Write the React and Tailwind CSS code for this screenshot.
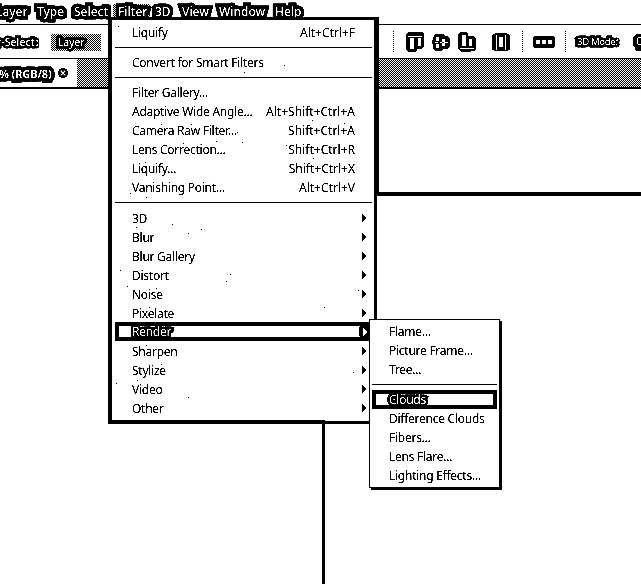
const menuTop = ["Filter Gallery...", "Adaptive Wide Angle...", "Camera Raw Filter...", "Lens Correction...", "Liquify...", "Vanishing Point..."];
const shortcuts = ["", "Alt+Shift+Ctrl+A", "Shift+Ctrl+A", "Shift+Ctrl+R", "Shift+Ctrl+X", "Alt+Ctrl+V"];
const groups = ["3D", "Blur", "Blur Gallery", "Distort", "Noise", "Pixelate", "Render", "Sharpen", "Stylize", "Video", "Other"];
const halo = "text-white [-webkit-text-stroke:7px_#000] [paint-order:stroke_fill]";
const thinHalo = "text-white [-webkit-text-stroke:5px_#000] [paint-order:stroke_fill]";
const checker = "bg-[repeating-conic-gradient(#000_0_25%,#fff_0_50%)] bg-[length:2px_2px]";
const menubar = [
  ["Layer", "w-[41px]"],
  ["Type", "w-[37px]"],
  ["Select", "w-[39px]"],
  ["Filter", "w-[37px] pl-[5px]"],
  ["3D", "w-[27px] pl-[5px]"],
  ["View", "w-[37px] pl-[5px]"],
  ["Window", "w-[56px] pl-[5px]"],
  ["Help", "w-[40px] pl-[5px]"],
];

function Arrow({ light }) {
  return (
    <svg width="4" height="8" viewBox="0 0 4 8" className="shrink-0" shapeRendering="crispEdges">
      <path d="M0 0h1v1h1v1h1v1h1v2h-1v1h-1v1h-1v1h-1z" fill={light ? "#fff" : "#000"} />
    </svg>
  );
}

function Row({ label, right }) {
  return (
    <div className="flex h-[19px] items-center justify-between pl-5 pr-[19px]">
      <span className="tracking-[-0.26px]">{label}</span>
      <span>{right}</span>
    </div>
  );
}

function Rule() {
  return <div className="ml-[3px] mr-[2px] h-px shrink-0 bg-black" />;
}

function ToolIcons() {
  return (
    <svg width="264" height="33" viewBox="377 25 264 33" className="block" shapeRendering="crispEdges">
      <path d="M393.500 31v22M522.500 31v22M565.500 31v22" stroke="#000" strokeDasharray="1 1" />
      <path d="M408 32h14l2 2v12l-3 3h-4v2l-2 1h-7l-2-2V34z" />
      <path d="M408 36h14v1h-14zM410 38h4v11h-4zM418 38h3v8h-3z" fill="#fff" />
      <path d="M435 34h8l2 2h3l2 3v7l-3 3h-4l-2 2h-6l-2-2v-4l-1-2 1-5z" />
      <path d="M435 42h3v1h-3zM440 42h2v1h-2zM444 42h4v1h-4zM436 37h3v4h-3zM436 44h3v4h-3zM442 39h3v3h-3zM442 43h3v3h-3z" fill="#fff" />
      <path d="M460 32h6l2 2v2h5l3 3v10l-2 2h-3v1h-10l-3-3V34z" />
      <path d="M462 35h4v11h-4zM469 39h3v7h-3zM460 48h14v1h-14z" fill="#fff" />
      <path d="M492 35l4-2h10l4 2v15l-4 1h-10l-4-1z" />
      <path d="M496.500 35v15M505.500 35v15" stroke="#fff" />
      <path d="M499 37h4v10h-4z" fill="#fff" />
      <path d="M533 37l2-1h18l2 1v10l-2 1h-18l-2-1z" />
      <path d="M536 40h4v4h-4zM542 40h4v4h-4zM548 40h4v4h-4z" fill="#fff" />
      <path d="M636 34h5v17h-5l-1-3-2-3v-7z" />
      <circle cx="641" cy="41" r="4" fill="none" stroke="#fff" />
    </svg>
  );
}

const specks = [[118, 26], [284, 65], [244, 72], [161, 124], [191, 124], [237, 132], [216, 141], [242, 142], [183, 143], [312, 120], [344, 123], [286, 145], [313, 158], [145, 162], [130, 193], [146, 197], [172, 224], [136, 227], [201, 229], [188, 233], [120, 270], [230, 274], [226, 281], [127, 286], [156, 288], [358, 290], [149, 307], [324, 307], [146, 345], [161, 364], [353, 372], [137, 380], [116, 383], [188, 397]];

export default function App() {
  return (
    <div className="relative flex h-[584px] w-[641px] flex-col overflow-hidden bg-white font-['Noto_Sans','Open_Sans',sans-serif] text-[12px] leading-[19px] text-black [filter:brightness(0.87)_contrast(6)]">
      <header className="flex h-6 shrink-0 whitespace-nowrap pt-[2px] text-[12px] font-medium">
        <div className="-ml-[4px] flex">
          {menubar.map(([name, width]) => (
            <span key={name} className={`${width} ${name === "Filter" ? `mt-[2px] h-[13px] leading-[15px] ${checker}` : ""}`}>
              <span className={halo}>{name}</span>
            </span>
          ))}
        </div>
      </header>
      <section className="flex h-[34px] shrink-0 border-t border-black">
        <div className="flex w-[377px] items-start pt-[9px]">
          <span className={`-ml-[3px] w-[54px] whitespace-nowrap text-[10.5px] font-medium leading-[16px] ${thinHalo}`}>r-Select:</span>
          <span className={`flex h-[17px] w-[50px] items-center pl-[7px] text-[10.5px] font-medium tracking-[-0.3px] ${checker}`}>
            <span className={thinHalo}>Layer</span>
          </span>
        </div>
        <div className="relative w-[264px]">
          <ToolIcons />
          <span className={`absolute left-[200px] top-[8px] whitespace-nowrap text-[9.5px] leading-[18px] tracking-[-0.3px] ${thinHalo}`}>3D Mode:</span>
        </div>
      </section>
      <section className="flex h-[31px] shrink-0 border-b-2 border-t border-black">
        <div className="flex w-[77px] items-center">
          <span className={`-ml-[1px] w-[59px] whitespace-nowrap text-[11px] font-bold tracking-[-0.1px] ${halo}`}>% (RGB/8)</span>
          <svg width="10" height="10" viewBox="0 0 10 10">
            <circle cx="5" cy="5" r="5" />
            <path d="M2.500 2.500l5 5M7.500 2.500l-5 5" stroke="#fff" strokeWidth="1.500" />
          </svg>
        </div>
        <div className={`flex-1 ${checker}`} />
      </section>
      <main className="flex flex-1 flex-col">
        <div className="ml-[377px] h-[107px] shrink-0 border-b-4 border-black" />
        <div className="ml-[322px] flex-1 border-l-[3px] border-black" />
      </main>

      <nav className="absolute left-[108px] top-[17px] flex h-[407px] w-[269px] flex-col border-b-[3px] border-l-4 border-r-[3px] border-t-[3px] border-black bg-white">
        <div className="pb-[5px] pt-[3px]"><Row label="Liquify" right="Alt+Ctrl+F" /></div>
        <Rule />
        <div className="pb-[5px] pt-[5px]"><Row label="Convert for Smart Filters" /></div>
        <Rule />
        <div className="pb-[5px] pt-[5px]">
          {menuTop.map((label, i) => <Row key={label} label={label} right={shortcuts[i]} />)}
        </div>
        <Rule />
        <div className="pt-[6px]">
          {groups.map((label) =>
            label === "Render" ? (
              <div key={label} className="relative -top-px ml-[3px] flex h-[19px] items-center justify-between border-4 border-r-0 border-black bg-white pl-[13px]">
                <span className={`tracking-[-0.26px] ${thinHalo}`}>{label}</span>
                <span className="flex h-[19px] w-[15px] items-center rounded-l-lg bg-black pl-1"><Arrow light /></span>
              </div>
            ) : (
              <div key={label} className="flex h-[19px] items-center justify-between pl-5 pr-2">
                <span className="tracking-[-0.26px]">{label}</span>
                <span className="pb-px"><Arrow /></span>
              </div>
            )
          )}
        </div>
      </nav>
      <div className="absolute left-[375px] top-[17px] h-[179px] w-1 bg-black" />
      <div className="absolute left-[108px] top-[420px] h-1 w-[217px] bg-black" />

      <nav className="absolute left-[369px] top-[319px] flex h-[169px] w-[131px] flex-col border border-black bg-white pt-[2px] tracking-[-0.26px] shadow-[2px_2px_0_#000]">
        {["Flame...", "Picture Frame...", "Tree..."].map((label) => (
          <div key={label} className="h-[19px] pl-[19px]">{label}</div>
        ))}
        <div className="mx-[2px] mb-[5px] mt-[5px] h-px bg-black" />
        <div className="mx-[2px] flex h-[19px] items-center border-4 border-black pl-[13px]">
          <span className={thinHalo}>Clouds</span>
        </div>
        {["Difference Clouds", "Fibers...", "Lens Flare...", "Lighting Effects..."].map((label) => (
          <div key={label} className="h-[19px] whitespace-nowrap pl-[19px]">{label}</div>
        ))}
      </nav>
      <svg width="641" height="584" className="absolute inset-0" shapeRendering="crispEdges">
        {specks.map(([x, y]) => <rect key={`${x}-${y}`} x={x} y={y} width="1" height="1" />)}
      </svg>
    </div>
  );
}
